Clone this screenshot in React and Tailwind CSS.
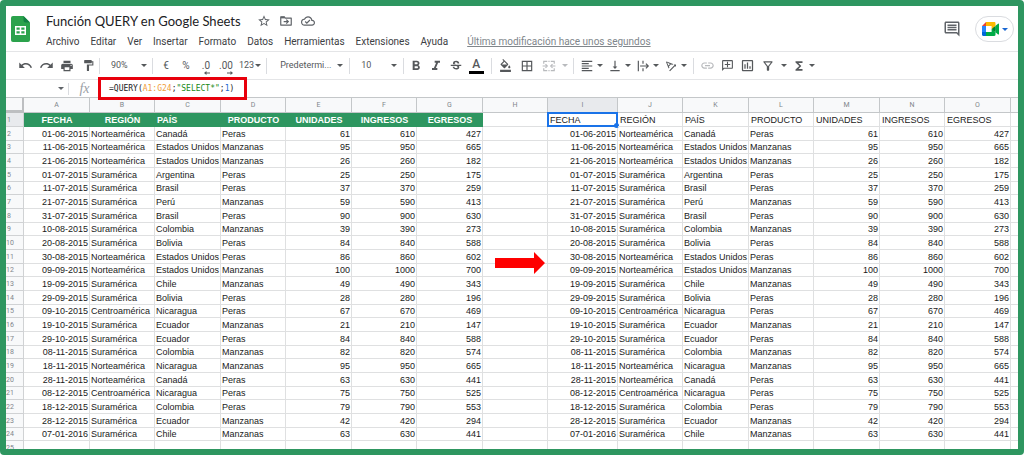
import {
  MdUndo, MdRedo, MdPrint, MdFormatPaint, MdFormatBold, MdFormatItalic, MdStrikethroughS,
  MdFormatColorFill, MdBorderAll, MdFormatAlignLeft, MdVerticalAlignBottom, MdTextRotationAngleup,
  MdLink, MdOutlineAddComment, MdOutlineInsertChart, MdOutlineFilterAlt, MdFunctions,
  MdStarBorder, MdOutlineCloudDone, MdOutlineComment,
} from 'react-icons/md';

const menus = ['Archivo', 'Editar', 'Ver', 'Insertar', 'Formato', 'Datos', 'Herramientas', 'Extensiones', 'Ayuda'];

const columns = [
  { name: 'A', width: 'w-[66px]' },
  { name: 'B', width: 'w-[65px]' },
  { name: 'C', width: 'w-[66px]' },
  { name: 'D', width: 'w-[65px]' },
  { name: 'E', width: 'w-[66px]' },
  { name: 'F', width: 'w-[65px]' },
  { name: 'G', width: 'w-[66px]' },
  { name: 'H', width: 'w-[65px]' },
  { name: 'I', width: 'w-[70px]' },
  { name: 'J', width: 'w-[65px]' },
  { name: 'K', width: 'w-[66px]' },
  { name: 'L', width: 'w-[65px]' },
  { name: 'M', width: 'w-[66px]' },
  { name: 'N', width: 'w-[65px]' },
  { name: 'O', width: 'w-[66px]' },
];

const headings = ['FECHA', 'REGIÓN', 'PAÍS', 'PRODUCTO', 'UNIDADES', 'INGRESOS', 'EGRESOS'];

const records = [
  ['01-06-2015', 'Norteamérica', 'Canadá', 'Peras', 61, 610, 427],
  ['11-06-2015', 'Norteamérica', 'Estados Unidos', 'Manzanas', 95, 950, 665],
  ['21-06-2015', 'Norteamérica', 'Estados Unidos', 'Manzanas', 26, 260, 182],
  ['01-07-2015', 'Suramérica', 'Argentina', 'Peras', 25, 250, 175],
  ['11-07-2015', 'Suramérica', 'Brasil', 'Peras', 37, 370, 259],
  ['21-07-2015', 'Suramérica', 'Perú', 'Manzanas', 59, 590, 413],
  ['31-07-2015', 'Suramérica', 'Brasil', 'Peras', 90, 900, 630],
  ['10-08-2015', 'Suramérica', 'Colombia', 'Manzanas', 39, 390, 273],
  ['20-08-2015', 'Suramérica', 'Bolivia', 'Peras', 84, 840, 588],
  ['30-08-2015', 'Norteamérica', 'Estados Unidos', 'Peras', 86, 860, 602],
  ['09-09-2015', 'Norteamérica', 'Estados Unidos', 'Manzanas', 100, 1000, 700],
  ['19-09-2015', 'Suramérica', 'Chile', 'Manzanas', 49, 490, 343],
  ['29-09-2015', 'Suramérica', 'Bolivia', 'Peras', 28, 280, 196],
  ['09-10-2015', 'Centroamérica', 'Nicaragua', 'Peras', 67, 670, 469],
  ['19-10-2015', 'Suramérica', 'Ecuador', 'Manzanas', 21, 210, 147],
  ['29-10-2015', 'Suramérica', 'Ecuador', 'Peras', 84, 840, 588],
  ['08-11-2015', 'Suramérica', 'Colombia', 'Manzanas', 82, 820, 574],
  ['18-11-2015', 'Norteamérica', 'Nicaragua', 'Manzanas', 95, 950, 665],
  ['28-11-2015', 'Norteamérica', 'Canadá', 'Peras', 63, 630, 441],
  ['08-12-2015', 'Centroamérica', 'Nicaragua', 'Peras', 75, 750, 525],
  ['18-12-2015', 'Suramérica', 'Colombia', 'Peras', 79, 790, 553],
  ['28-12-2015', 'Suramérica', 'Ecuador', 'Manzanas', 42, 420, 294],
  ['07-01-2016', 'Suramérica', 'Chile', 'Manzanas', 63, 630, 441],
];

const align = ['text-right', 'text-left', 'text-left', 'text-left', 'text-right', 'text-right', 'text-right'];

const Caret = () => (
  <svg viewBox="0 0 6 3" className="h-[3px] w-[6px] shrink-0" fill="currentColor" aria-hidden="true">
    <path d="M0 0h6L3 3z" />
  </svg>
);

const Divider = () => <span className="mx-px h-4 w-px shrink-0 bg-[#dadce0]" />;

const Tool = ({ label, children }) => (
  <button type="button" aria-label={label} className="flex h-5 w-5 shrink-0 items-center justify-center">
    {children}
  </button>
);

const DropTool = ({ label, children }) => (
  <button type="button" aria-label={label} className="flex h-5 w-7 shrink-0 items-center gap-[3px] pl-0.5">
    {children}
    <Caret />
  </button>
);

const SheetsLogo = () => (
  <svg viewBox="0 0 19 26" className="mt-1 h-[26px] w-[19px] shrink-0" aria-label="Hojas de cálculo">
    <path d="M2 0h10.500l6.500 6.500V24a2 2 0 0 1-2 2H2a2 2 0 0 1-2-2V2a2 2 0 0 1 2-2z" fill="#2ba24c" />
    <path d="M12.500 0L19 6.500h-4.500a2 2 0 0 1-2-2z" fill="#128043" />
    <path d="M4 10h11v9H4zM5.500 11.500v2.200h3.200v-2.200zM10.300 11.500v2.200h3.200v-2.200zM5.500 15.300v2.200h3.200v-2.200zM10.300 15.300v2.200h3.200v-2.200z" fill="#fff" fillRule="evenodd" />
  </svg>
);

const MoveIcon = () => (
  <svg viewBox="0 0 24 24" className="h-[14px] w-[14px]" fill="none" stroke="currentColor" strokeWidth="2">
    <path d="M3 5h6l2 2h10v12H3z" strokeLinejoin="round" />
    <path d="M3 6h7" strokeWidth="3" />
    <path d="M8 13h7M12.500 9.500l3.500 3.500-3.500 3.500" />
  </svg>
);

const MeetIcon = () => (
  <svg viewBox="0 0 87.500 72" className="h-[14px] w-[17px]" aria-hidden="true">
    <path fill="#00832d" d="M49.500 36l8.530 9.750 11.470 7.330 2-17.020-2-16.640-11.690 6.440z" />
    <path fill="#0066da" d="M0 51.500V66c0 3.315 2.685 6 6 6h14.500l3-10.960-3-9.540-9.950-3z" />
    <path fill="#e94235" d="M20.500 0L0 20.500l10.550 3 9.950-3 2.950-9.410z" />
    <path fill="#2684fc" d="M20.500 20.500H0v31h20.500z" />
    <path fill="#00ac47" d="M82.600 8.680L69.500 19.420v33.660l13.160 10.790c1.970 1.540 4.850.135 4.850-2.370V11c0-2.535-2.945-3.925-4.910-2.320zM49.500 36v15.500h-29V72h43c3.315 0 6-2.685 6-6V53.080z" />
    <path fill="#ffba00" d="M63.500 0h-43v20.500h29V36l20-16.570V6c0-3.315-2.685-6-6-6z" />
  </svg>
);

const MergeIcon = () => (
  <svg viewBox="0 0 24 24" className="h-[14px] w-[14px]" fill="none" stroke="currentColor" strokeWidth="2">
    <path d="M3 8V4h6M15 4h6v4M3 16v4h6M15 20h6v-4M11 4h2M11 20h2" />
    <path d="M1 12h7M23 12h-7" />
    <path d="M6 9l3 3-3 3M18 9l-3 3 3 3" />
  </svg>
);

const OverflowIcon = () => (
  <svg viewBox="0 0 24 24" className="h-[14px] w-[14px]" fill="none" stroke="currentColor" strokeWidth="2">
    <path d="M4 3v18M12 3v5M12 16v5M7 12h13M17 8l4 4-4 4" />
  </svg>
);

// Small arrow under the decimal buttons
const DecimalArrow = ({ className }) => (
  <svg viewBox="0 0 6 4" className={`h-1 w-1.5 ${className}`} aria-hidden="true">
    <path d="M6 1.500H2.500V0L0 2l2.500 2V2.500H6z" fill="currentColor" />
  </svg>
);

const Header = () => (
  <header className="flex h-[46px] items-start border-b border-[#e4e5e7] pl-[5px] pr-1 pt-1.5">
    <SheetsLogo />
    <div className="flex flex-col pl-4">
      <div className="flex h-[18px] items-center gap-2 text-[#5f6368]">
        <h1 className="mr-2 whitespace-nowrap font-['Lato',sans-serif] text-[13px] leading-[18px] text-[#202124]">
          Función QUERY en Google Sheets
        </h1>
        <button type="button" aria-label="Destacar"><MdStarBorder size={14} /></button>
        <button type="button" aria-label="Mover"><MoveIcon /></button>
        <button type="button" aria-label="Estado del documento"><MdOutlineCloudDone size={14} /></button>
      </div>
      <nav className="flex items-center gap-[11px] whitespace-nowrap pt-1 text-[10px] leading-4 text-[#3c4043]">
        {menus.map((menu) => (
          <button key={menu} type="button">{menu}</button>
        ))}
        <a href="#historial" className="pl-2 text-[#80868b] underline">Última modificación hace unos segundos</a>
      </nav>
    </div>
    <div className="ml-auto mt-1 flex items-center gap-3.5">
      <button type="button" aria-label="Comentarios" className="text-[#5f6368]">
        <MdOutlineComment size={18} />
      </button>
      <button type="button" aria-label="Meet" className="flex h-[26px] w-[39px] items-center justify-center gap-[3px] rounded-full border border-[#dadce0] text-[#1967d2]">
        <MeetIcon />
        <Caret />
      </button>
    </div>
  </header>
);

const Toolbar = () => (
  <div className="flex h-7 items-center overflow-hidden border-b border-[#e4e5e7] pl-[9px] text-[9px] text-[#55585b]">
    <div className="flex gap-px">
      <Tool label="Deshacer"><MdUndo size={15} /></Tool>
      <Tool label="Rehacer"><MdRedo size={15} /></Tool>
      <Tool label="Imprimir"><MdPrint size={14} /></Tool>
      <Tool label="Copiar formato"><MdFormatPaint size={13} /></Tool>
    </div>
    <Divider />
    <label className="flex w-[50px] shrink-0 items-center justify-between pl-2.5 pr-1">
      <select aria-label="Zoom" className="w-6 appearance-none bg-transparent">
        <option>90%</option>
      </select>
      <Caret />
    </label>
    <Divider />
    <div className="flex items-center pl-0.5 pr-1 text-[10px]">
      <Tool label="Moneda">€</Tool>
      <Tool label="Porcentaje">%</Tool>
      <Tool label="Reducir decimales">
        <span className="flex flex-col pt-1 leading-[10px]">.0<DecimalArrow className="self-end" /></span>
      </Tool>
      <Tool label="Aumentar decimales">
        <span className="flex flex-col pt-1 leading-[10px]">.00<DecimalArrow className="rotate-180 self-end" /></span>
      </Tool>
      <button type="button" className="flex items-center gap-px pl-[3px] text-[9px]">
        123
        <Caret />
      </button>
    </div>
    <Divider />
    <label className="flex w-[80px] shrink-0 items-center justify-between pl-3 pr-[5px]">
      <select aria-label="Fuente" className="w-[54px] appearance-none bg-transparent">
        <option>Predetermi...</option>
      </select>
      <Caret />
    </label>
    <Divider />
    <label className="flex w-[51px] shrink-0 items-center justify-between pl-2.5 pr-[5px]">
      <select aria-label="Tamaño de fuente" className="w-5 appearance-none bg-transparent">
        <option>10</option>
      </select>
      <Caret />
    </label>
    <Divider />
    <div className="flex w-[85px] shrink-0 items-center pl-px">
      <Tool label="Negrita"><MdFormatBold size={16} /></Tool>
      <Tool label="Cursiva"><MdFormatItalic size={16} /></Tool>
      <Tool label="Tachado"><MdStrikethroughS size={14} /></Tool>
      <Tool label="Color de texto">
        <span className="w-[15px] border-b-[3px] border-black text-center text-[12px] font-medium leading-[13px]">A</span>
      </Tool>
    </div>
    <Divider />
    <div className="flex w-[79px] shrink-0 items-center gap-0.5 pl-0.5">
      <Tool label="Color de relleno"><MdFormatColorFill size={13} /></Tool>
      <Tool label="Bordes"><MdBorderAll size={14} /></Tool>
      <span className="text-[#b8babd]">
        <button type="button" aria-label="Combinar celdas" disabled className="flex h-5 items-center gap-1.5 pl-[3px]">
          <MergeIcon />
          <Caret />
        </button>
      </span>
    </div>
    <Divider />
    <div className="flex shrink-0 pl-[3px] pr-0.5">
      <DropTool label="Alineación horizontal"><MdFormatAlignLeft size={14} /></DropTool>
      <DropTool label="Alineación vertical"><MdVerticalAlignBottom size={14} /></DropTool>
      <DropTool label="Ajuste de texto"><OverflowIcon /></DropTool>
      <DropTool label="Rotación de texto"><MdTextRotationAngleup size={14} /></DropTool>
    </div>
    <Divider />
    <div className="flex shrink-0 pl-0.5">
      <span className="text-[#b8babd]"><Tool label="Insertar enlace"><MdLink size={15} /></Tool></span>
      <Tool label="Insertar comentario"><MdOutlineAddComment size={13} className="-scale-x-100" /></Tool>
      <Tool label="Insertar gráfico"><MdOutlineInsertChart size={15} /></Tool>
      <button type="button" aria-label="Crear filtro" className="flex h-5 items-center gap-1.5 pl-1 pr-[3px]">
        <MdOutlineFilterAlt size={14} />
        <Caret />
      </button>
      <DropTool label="Funciones"><MdFunctions size={14} /></DropTool>
    </div>
  </div>
);

const FormulaBar = () => (
  <div className="flex h-[17px] items-center">
    <button type="button" aria-label="Cuadro de nombres" className="flex w-[58px] justify-end text-[#5f6368]">
      <Caret />
    </button>
    <span className="ml-1 h-3 w-px bg-[#dadce0]" />
    <span className="w-[29px] pl-0.5 text-center font-['Liberation_Serif',serif] text-[14px] italic leading-4 text-[#9aa0a6]">fx</span>
    {/* Highlighted formula */}
    <div className="relative z-10 h-[23px] border-[3px] border-[#e8000c] bg-white pl-2 pr-2.5">
      <div
        role="textbox"
        aria-label="Barra de fórmulas"
        contentEditable
        suppressContentEditableWarning
        className="whitespace-nowrap font-['DejaVu_Sans_Mono',monospace] text-[8px] leading-[17px] text-[#202124]"
      >
        =QUERY(<span className="text-[#f09d3a]">A1:G24</span>;<span className="text-[#188a18]">"SELECT*"</span>;<span className="text-[#1967d2]">1</span>)
      </div>
    </div>
  </div>
);

const Arrow = () => (
  <svg viewBox="0 0 50 22" className="absolute left-3 top-0.5 z-10 h-[22px] w-[50px]" fill="#fe0000" aria-hidden="true">
    <path d="M0 6h39V0l11 11-11 11v-6H0z" />
  </svg>
);

const cell = 'border-b border-r border-[#dfe0e1] p-0 whitespace-nowrap';

const Sheet = () => (
  <table className="w-full table-fixed border-separate border-spacing-0 font-['Liberation_Sans',sans-serif] text-[9px] leading-[12px] text-[#1a1a1a]">
    <colgroup>
      <col className="w-[18px]" />
      {columns.map((column) => (
        <col key={column.name} className={column.width} />
      ))}
      <col />
    </colgroup>
    <thead className="text-[7px] text-[#80868b]">
      <tr className="h-4 bg-[#f8f9fa]">
        <th className="border-b-[3px] border-r-2 border-t border-[#bdbfc1] border-t-[#c4c7c9] p-0" />
        {columns.map((column) => (
          <th
            key={column.name}
            scope="col"
            className={`border-b border-r border-t border-[#c4c7c9] p-0 font-['Roboto',sans-serif] font-normal ${column.name === 'I' ? 'bg-[#e8eaed]' : ''}`}
          >
            {column.name}
          </th>
        ))}
        <th className="border-b border-t border-[#c4c7c9] p-0" />
      </tr>
    </thead>
    <tbody>
      <tr className="h-[14px]">
        <RowNumber value={1} active />
        {headings.map((heading) => (
          <td
            key={heading}
            className={`bg-[#2e9660] p-0 px-0.5 font-bold text-white ${heading === 'PAÍS' ? 'text-left' : 'text-center'}`}
          >
            {heading}
          </td>
        ))}
        <td className={cell} />
        {headings.map((heading) => (
          <td key={heading} className={`relative ${cell}`}>
            <span className="px-0.5">{heading}</span>
            {heading === 'FECHA' && (
              <span className="absolute -inset-px border-2 border-[#1a73e8]">
                <span className="absolute -bottom-[3px] -right-[3px] h-[5px] w-[5px] rounded-full bg-[#1a73e8]" />
              </span>
            )}
          </td>
        ))}
        <td className="border-b border-[#dfe0e1] p-0" />
      </tr>
      {records.map((record, index) => (
        <tr key={record[0]} className={index % 3 === 1 ? 'h-[13px]' : 'h-[14px]'}>
          <RowNumber value={index + 2} />
          {record.map((value, i) => (
            <td key={i} className={`${cell} ${align[i]}`}><span className="px-px">{value}</span></td>
          ))}
          <td className={`relative ${cell}`}>{index === 9 && <Arrow />}</td>
          {record.map((value, i) => (
            <td key={i} className={`${cell} ${align[i]}`}><span className="px-px">{value}</span></td>
          ))}
          <td className="border-b border-[#dfe0e1] p-0" />
        </tr>
      ))}
      <tr className="h-[14px]">
        <RowNumber value={25} />
        {columns.map((column) => (
          <td key={column.name} className={cell} />
        ))}
        <td className="p-0" />
      </tr>
    </tbody>
  </table>
);

const RowNumber = ({ value, active }) => (
  <th
    scope="row"
    className={`border-b border-r border-[#d0d2d4] p-0 text-left font-['Roboto',sans-serif] text-[7px] font-normal text-[#80868b] ${active ? 'bg-[#e8eaed]' : 'bg-[#f8f9fa]'}`}
  >
    <span className={value < 10 ? 'pl-px' : ''}>{value}</span>
  </th>
);

const App = () => (
  <div className="h-screen overflow-hidden rounded-[4px] border-[6px] border-[#2e9660] bg-white font-['Roboto',sans-serif]">
    <Header />
    <Toolbar />
    <FormulaBar />
    <Sheet />
  </div>
);

export default App;
